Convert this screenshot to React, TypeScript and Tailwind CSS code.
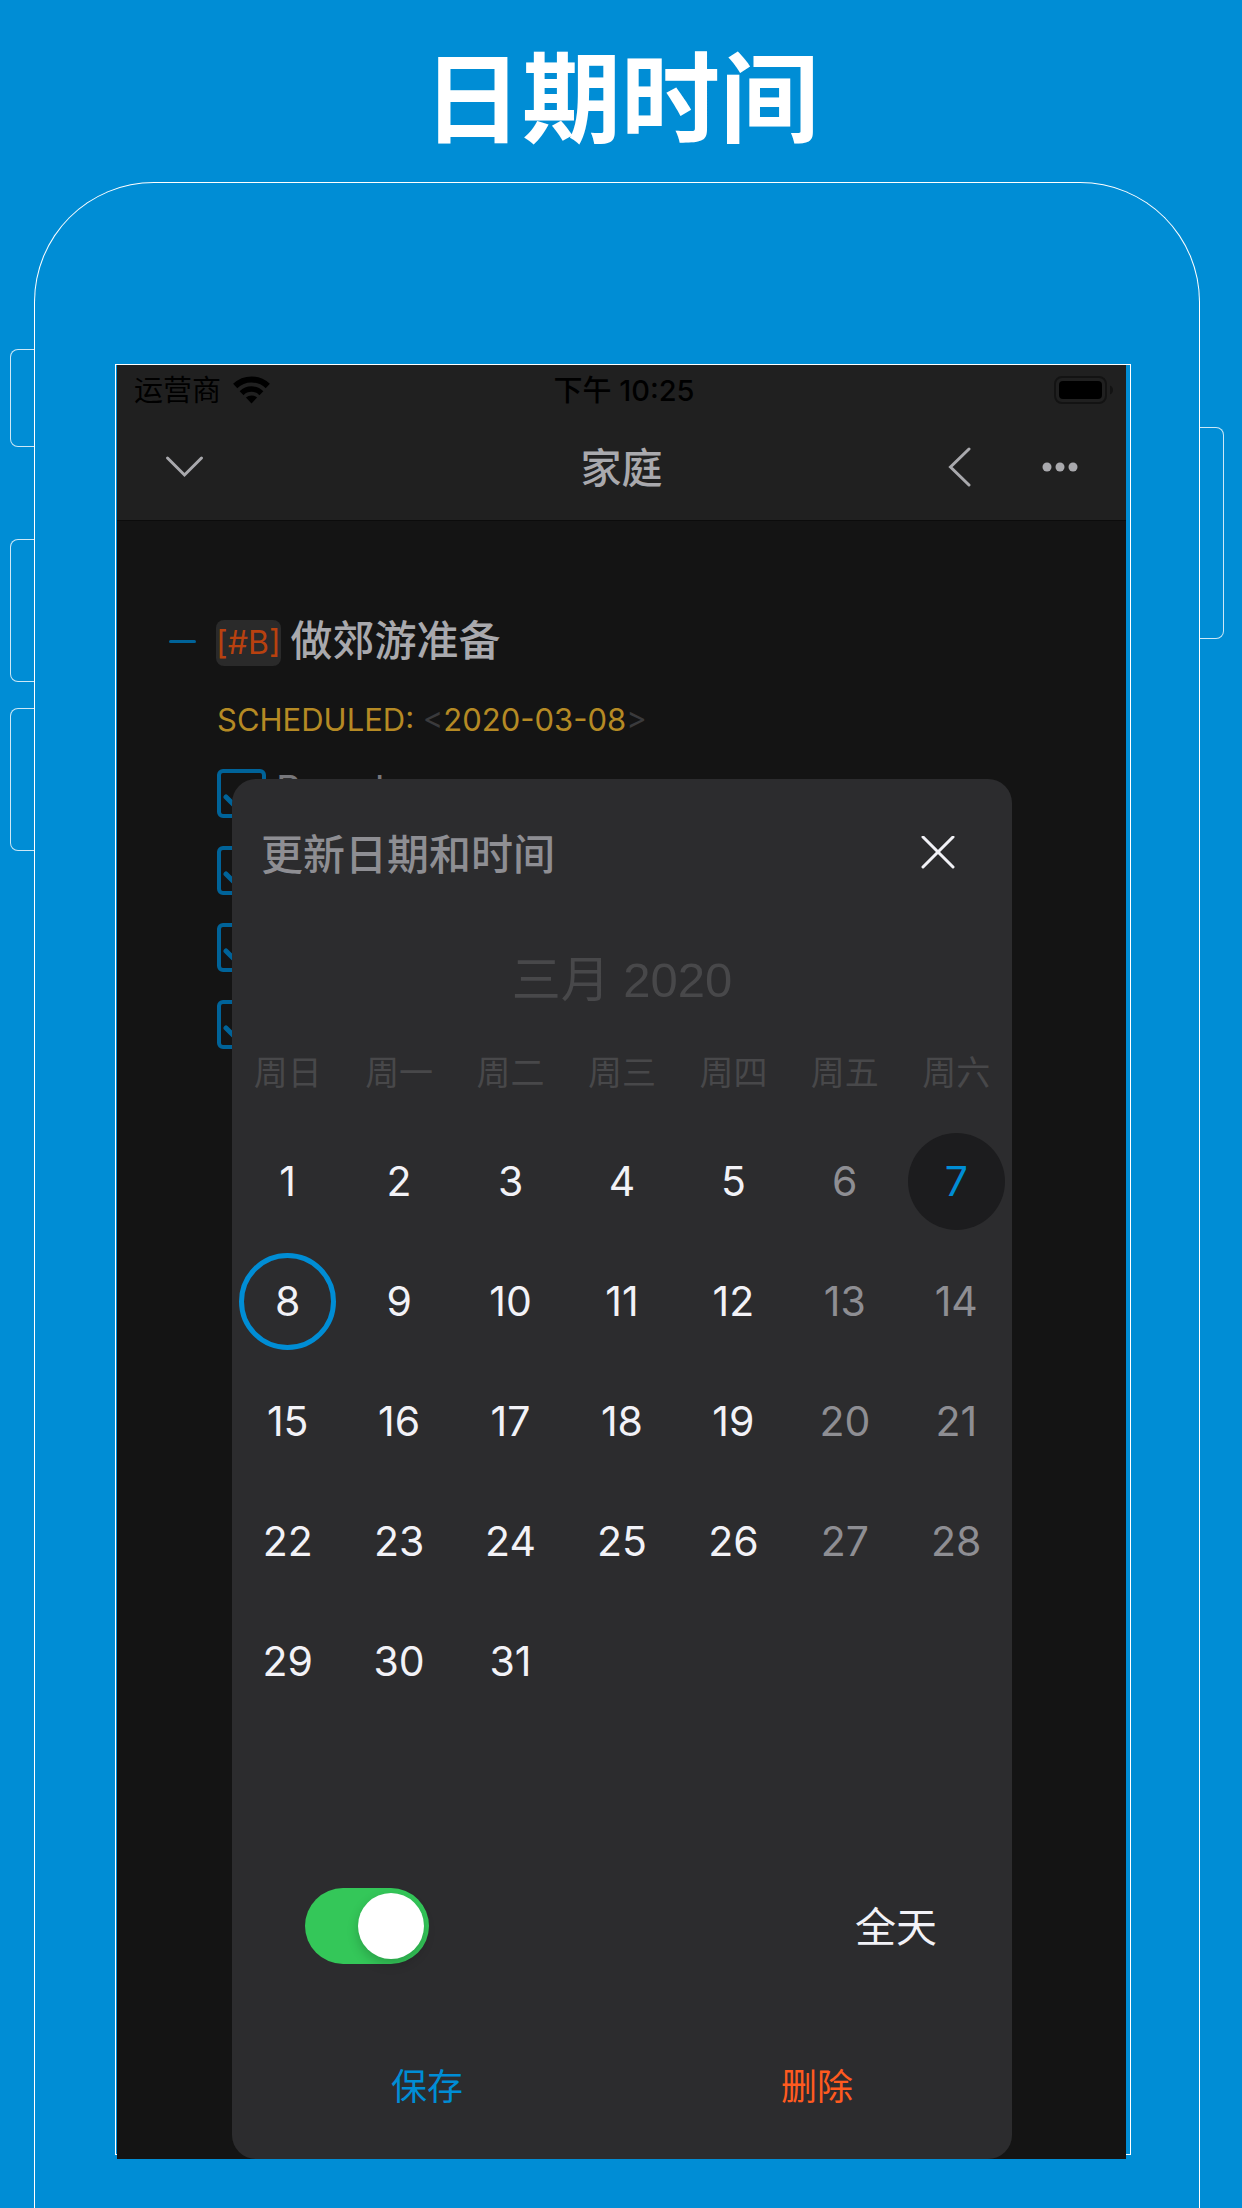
import React, { useState } from "react";

const WEEKDAYS = ["周日", "周一", "周二", "周三", "周四", "周五", "周六"];
const WEEKS = [0, 1, 2, 3, 4].map((w) =>
  [1, 2, 3, 4, 5, 6, 7].map((d) => w * 7 + d).map((d) => (d <= 31 ? d : null)),
);
const TODAY = 7;

function WifiIcon() {
  return (
    <svg viewBox="0 0 37 28" className="h-7 w-[37px]" fill="none" stroke="#000" aria-hidden="true">
      <path d="M2.2 10A23.5 23.5 0 0 1 34.8 10" strokeWidth="6" />
      <path d="M8.6 17.2A14 14 0 0 1 28.4 17.2" strokeWidth="5.5" />
      <path d="M18.5 27.5L12.9 21.6A8.2 8.2 0 0 1 24.1 21.6Z" fill="#000" stroke="none" />
    </svg>
  );
}

function BatteryIcon() {
  return (
    <svg viewBox="0 0 60 28" className="h-7 w-[60px]" aria-hidden="true">
      <rect x="1" y="1" width="51" height="26" rx="7" fill="none" stroke="#131313" strokeWidth="2" />
      <rect x="5" y="5" width="43" height="18" rx="4" fill="#000" />
      <path d="M56 9.5C60 11 60 17 56 18.5Z" fill="#131313" />
    </svg>
  );
}

function StatusBar() {
  return (
    <div className="grid h-[50px] grid-cols-3 items-center pl-[17px] pr-3 text-[29px] leading-none text-black">
      <div className="flex items-center gap-3">
        <span>运营商</span>
        <WifiIcon />
      </div>
      <div className="text-center font-medium">下午 10:25</div>
      <div className="flex justify-end">
        <BatteryIcon />
      </div>
    </div>
  );
}

function NavBar() {
  return (
    <div className="grid h-[105px] grid-cols-3 items-center px-12 pb-[2px] text-[#a9a9ad]">
      <button type="button" aria-label="收起" className="w-10">
        <svg viewBox="0 0 40 40" className="size-10" fill="none" stroke="currentColor" strokeWidth="3" strokeLinecap="round">
          <path d="M2.5 11L19.500 28L36.500 11" />
        </svg>
      </button>
      <h2 className="pt-1 text-center text-[41px] font-medium leading-none">家庭</h2>
      <div className="flex items-center justify-end gap-[70px]">
        <button type="button" aria-label="返回">
          <svg viewBox="0 0 24 40" className="h-10 w-6" fill="none" stroke="currentColor" strokeWidth="3" strokeLinecap="round">
            <path d="M21 2L2.500 20L21 38" />
          </svg>
        </button>
        <button type="button" aria-label="更多">
          <svg viewBox="0 0 36 10" className="h-[10px] w-9" fill="currentColor">
            <circle cx="5" cy="5" r="4.500" />
            <circle cx="18" cy="5" r="4.500" />
            <circle cx="31" cy="5" r="4.500" />
          </svg>
        </button>
      </div>
    </div>
  );
}

function CheckItem({ text, name }: { text?: string; name: string }) {
  return (
    <li className="flex h-[77px] items-center">
      <label className="flex items-center gap-[10px]">
        <span className="grid">
          <input
            type="checkbox"
            defaultChecked
            aria-label={text ? undefined : name}
            className="size-[49px] appearance-none rounded-[6px] border-4 border-[#006399] [grid-area:1/1]"
          />
          <svg viewBox="0 0 48 48" className="pointer-events-none size-12 [grid-area:1/1]" fill="none" stroke="#006399" strokeWidth="5" strokeLinecap="round">
            <path d="M9 28L18 37L39 15" />
          </svg>
        </span>
        {text && <span className="pb-2 text-[39px] leading-none text-[#77777b]">{text}</span>}
      </label>
    </li>
  );
}

function Outline() {
  return (
    <div className="flex flex-col pl-[52px] pt-[94px]">
      <div className="flex h-[52px] items-center">
        <span className="mr-5 h-[3px] w-[27px] rounded-full bg-[#006399]" />
        <span className="mr-[10px] mt-1 flex h-[46px] items-center rounded-lg bg-[#2a2a2a] text-[32px] leading-none text-[#b8410f]">
          [#B]
        </span>
        <h3 className="text-[42px] font-medium leading-none text-[#a9a9ad]">做郊游准备</h3>
      </div>
      <div className="flex h-[88px] items-end whitespace-pre pb-[11px] pl-12 text-[31px] leading-[48px] text-[#b58a24]">
        <p>
          SCHEDULED: <span className="text-[#3a3a3c]">&lt;</span>2020-03-08
          <span className="text-[#3a3a3c]">&gt;</span>
        </p>
      </div>
      <ul className="pl-12">
        <CheckItem text="Bread" name="1" />
        <CheckItem name="2" />
        <CheckItem name="3" />
        <CheckItem name="4" />
      </ul>
    </div>
  );
}

function DateDialog() {
  const [selected, setSelected] = useState(8);
  const [allDay, setAllDay] = useState(true);

  return (
    <section
      role="dialog"
      aria-labelledby="dialog-title"
      className="ml-[115px] mr-[114px] mt-[414px] flex flex-col rounded-3xl bg-[#2c2c2e] [grid-area:1/1]"
    >
      <header className="flex h-[148px] items-center justify-between pl-[29px] pr-[57px]">
        <h2 id="dialog-title" className="pt-1 text-[42px] font-medium leading-none text-[#8e8e93]">
          更新日期和时间
        </h2>
        <button type="button" aria-label="关闭">
          <svg viewBox="0 0 34 34" className="size-[34px]" fill="none" stroke="#f2f2f7" strokeWidth="3" strokeLinecap="round">
            <path d="M2 1L32 31M32 1L2 31" />
          </svg>
        </button>
      </header>

      <table className="mt-[10px] w-full table-fixed border-collapse text-center">
        <caption className="h-[86px] text-[49px] leading-[86px] text-[#48484a]">
          <span className="font-['Liberation_Sans','Noto_Sans_CJK_SC',sans-serif]">三月 2020</span>
        </caption>
        <thead>
          <tr className="h-[98px]">
            {WEEKDAYS.map((d) => (
              <th key={d} scope="col" className="p-0 pt-[2px] text-[34px] font-normal leading-none text-[#48484a]">
                {d}
              </th>
            ))}
          </tr>
        </thead>
        <tbody>
          {WEEKS.map((week, w) => (
            <tr key={w} className="h-[120px]">
              {week.map((day, i) => {
                const weekend = i > 4;
                const color = day === TODAY ? "bg-[#1c1c1e] text-[#008dd5]" : weekend ? "text-[#8e8e93]" : "text-[#f2f2f7]";
                const ring = day === selected ? "border-[#008dd5]" : "border-transparent";
                return (
                  <td key={i} className="p-0">
                    {day && (
                      <button
                        type="button"
                        onClick={() => setSelected(day)}
                        className={`inline-flex size-[97px] items-center justify-center rounded-full border-[5px] align-middle text-[41px] leading-none ${color} ${ring}`}
                      >
                        {day}
                      </button>
                    )}
                  </td>
                );
              })}
            </tr>
          ))}
        </tbody>
      </table>

      <label className="mt-[118px] flex h-[174px] items-center justify-between pl-[73px] pr-[75px]">
        <span className="grid items-center">
          <input
            type="checkbox"
            role="switch"
            checked={allDay}
            onChange={(e) => setAllDay(e.target.checked)}
            className="peer h-[76px] w-[124px] appearance-none rounded-full bg-[#48484a] checked:bg-[#34c759] [grid-area:1/1]"
          />
          <span className="pointer-events-none ml-[5px] size-[66px] rounded-full bg-white shadow-[0_5px_12px_rgba(0,0,0,0.2)] [grid-area:1/1] peer-checked:ml-[53px]" />
        </span>
        <span className="pt-[2px] text-[41px] leading-none text-[#f2f2f7]">全天</span>
      </label>

      <footer className="grid h-[146px] grid-cols-2 pt-[2px] text-[36px] leading-none">
        <button type="button" className="text-[#008dd5]">保存</button>
        <button type="button" className="text-[#ff5a1f]">删除</button>
      </footer>
    </section>
  );
}

export default function App() {
  return (
    <div className="flex min-h-screen flex-col overflow-hidden bg-[#008dd5] font-['Inter','Noto_Sans_CJK_SC',sans-serif]">
      <h1 className="h-[182px] pt-[11px] text-center text-[99px] font-bold leading-[176px] text-white">日期时间</h1>

      <div className="relative ml-[34px] mr-[42px] flex-1 rounded-t-[120px] border border-b-0 border-white">
        <span className="absolute -left-[25px] top-[166px] h-[98px] w-[25px] rounded-l-lg border border-r-0 border-white/80" />
        <span className="absolute -left-[25px] top-[356px] h-[143px] w-[25px] rounded-l-lg border border-r-0 border-white/80" />
        <span className="absolute -left-[25px] top-[525px] h-[143px] w-[25px] rounded-l-lg border border-r-0 border-white/80" />
        <span className="absolute -right-[25px] top-[244px] h-[212px] w-[25px] rounded-r-lg border border-l-0 border-white/80" />

        <div className="ml-20 mr-[68px] mt-[181px] border border-white pl-px pr-1">
          <main className="-mb-[5px] grid bg-[#141414]">
            <div className="[grid-area:1/1]">
              <header className="border-b border-[#0c0c0c] bg-[#202020]">
                <StatusBar />
                <NavBar />
              </header>
              <Outline />
            </div>
            <DateDialog />
          </main>
        </div>
      </div>
    </div>
  );
}
